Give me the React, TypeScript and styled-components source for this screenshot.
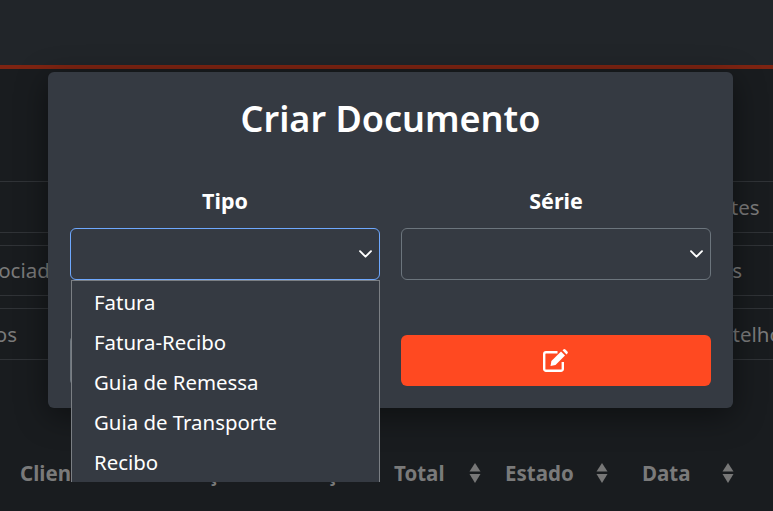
import styled, { createGlobalStyle } from 'styled-components';

const TIPOS = ['Fatura', 'Fatura-Recibo', 'Guia de Remessa', 'Guia de Transporte', 'Recibo'];

const LINKS = [
  { left: '', leftWidth: 0, right: 'Clientes', rightWidth: 90 },
  { left: 'Documentos Associados', leftWidth: 72, right: 'Artigos', rightWidth: 100 },
  { left: 'Recibos', leftWidth: 17, right: 'Martelho', rightWidth: 79 },
];

const COLUMNS = [
  { label: 'Cliente', width: 154, gap: 0, sortable: false },
  { label: 'Preço', width: 89, gap: 0, sortable: false },
  { label: 'Descrição', width: 131, gap: 0, sortable: false },
  { label: 'Total', width: 111, gap: 24, sortable: true },
  { label: 'Estado', width: 137, gap: 22, sortable: true },
  { label: 'Data', width: 131, gap: 32, sortable: true },
];

const Chevron = () => (
  <svg width="13" height="8" viewBox="0 0 13 8" fill="none">
    <path d="M1 1.2l5.5 5.5L12 1.2" stroke="#fff" strokeWidth="1.9" strokeLinecap="round" strokeLinejoin="round" />
  </svg>
);

const SortIcon = () => (
  <svg width="12" height="20" viewBox="0 0 12 20" fill="#777">
    <path d="M6 0l5.5 8.5H.5z" />
    <path d="M6 20l5.5-9H.5z" />
  </svg>
);

const EditIcon = () => (
  <svg width="26" height="23" viewBox="0 0 26 23" fill="none">
    <path
      d="M14.5 3.2H3a1.8 1.8 0 0 0-1.8 1.8v15A1.8 1.8 0 0 0 3 21.800h15a1.8 1.8 0 0 0 1.800-1.800v-7"
      stroke="#fff"
      strokeWidth="2.4"
    />
    <path d="M7.500 17l.9-5L18 2.500l4 4L12.500 16z" fill="#fff" />
    <path d="M19.500 1.300l.9-.8a1.500 1.500 0 0 1 2 0l2 2a1.500 1.500 0 0 1 0 2l-.9.9z" fill="#fff" />
  </svg>
);

const App = () => {
  return (
    <Page>
      <GlobalStyle />
      <Header />
      <LinkList>
        {LINKS.map((link) => (
          <LinkRow key={link.right}>
            <LeftLink $width={link.leftWidth}>{link.left}</LeftLink>
            <RightLink $width={link.rightWidth}>{link.right}</RightLink>
          </LinkRow>
        ))}
      </LinkList>
      <TableHead>
        {COLUMNS.map((column) => (
          <HeadCell key={column.label} $width={column.width} $gap={column.gap}>
            {column.label}
            {column.sortable && <SortIcon />}
          </HeadCell>
        ))}
      </TableHead>
      <Modal>
        <Title>Criar Documento</Title>
        <FieldGrid>
          <Field>
            <FieldLabel>Tipo</FieldLabel>
            <SelectBox $focused>
              <Chevron />
              <OptionList>
                {TIPOS.map((tipo) => (
                  <Option key={tipo}>{tipo}</Option>
                ))}
              </OptionList>
            </SelectBox>
          </Field>
          <Field>
            <FieldLabel>Série</FieldLabel>
            <SelectBox>
              <Chevron />
            </SelectBox>
          </Field>
          <ActionButton $variant="secondary" type="button" />
          <ActionButton $variant="primary" type="button">
            <EditIcon />
          </ActionButton>
        </FieldGrid>
      </Modal>
    </Page>
  );
};

export default App;

const GlobalStyle = createGlobalStyle`
  html, body {
    margin: 0;
    padding: 0;
    background: #191c1f;
  }
  * {
    box-sizing: border-box;
  }
`;

const Page = styled.div`
  position: relative;
  width: 773px;
  height: 511px;
  overflow: hidden;
  background: #191c1f;
  color: #fff;
  font-family: 'Noto Sans', 'Open Sans', sans-serif;
`;

const Header = styled.div`
  height: 69px;
  background: #212529;
  border-bottom: 4px solid #7e2412;
`;

const LinkList = styled.div`
  display: flex;
  flex-direction: column;
  gap: 12px;
  margin-top: 112px;
`;

const LinkRow = styled.div`
  display: flex;
  justify-content: space-between;
  align-items: center;
  height: 51.5px;
  border-top: 1px solid #303337;
  border-bottom: 1px solid #303337;
  color: #7a7a7a;
  font-size: 20.5px;
  white-space: nowrap;
`;

const LeftLink = styled.div<{ $width: number }>`
  display: flex;
  justify-content: flex-end;
  width: ${({ $width }) => $width}px;
`;

const RightLink = styled.div<{ $width: number }>`
  width: ${({ $width }) => $width}px;
`;

const TableHead = styled.div`
  display: flex;
  align-items: center;
  height: 30px;
  margin-top: 98.5px;
  padding-left: 20px;
  color: #7a7a7a;
  font-size: 20.5px;
  font-weight: 700;
  white-space: nowrap;
`;

const HeadCell = styled.div<{ $width: number; $gap: number }>`
  display: flex;
  align-items: center;
  flex: none;
  gap: ${({ $gap }) => $gap}px;
  width: ${({ $width }) => $width}px;
`;

const Modal = styled.div`
  position: absolute;
  top: 72px;
  left: 48px;
  width: 685px;
  height: 336px;
  padding: 22px;
  border-radius: 6px;
  background: #353a42;
  box-shadow: 0 8px 32px rgba(0, 0, 0, 0.45);
`;

const Title = styled.h2`
  margin: 0 0 43px;
  font-size: 36px;
  font-weight: 600;
  line-height: 50px;
  text-align: center;
`;

const FieldGrid = styled.div`
  display: grid;
  grid-template-columns: 310px 310px;
  column-gap: 21px;
  row-gap: 55px;
`;

const Field = styled.div`
  display: flex;
  flex-direction: column;
  gap: 14px;
`;

const FieldLabel = styled.div`
  font-size: 21.5px;
  font-weight: 700;
  line-height: 27px;
  text-align: center;
`;

const SelectBox = styled.div<{ $focused?: boolean }>`
  position: relative;
  display: flex;
  justify-content: flex-end;
  align-items: center;
  height: 52px;
  padding-right: 7px;
  border: 1px solid ${({ $focused }) => ($focused ? '#6ea8fe' : '#6c757d')};
  border-radius: 6px;
`;

const OptionList = styled.ul`
  position: absolute;
  top: 51px;
  left: 0;
  z-index: 2;
  width: 309px;
  height: 202px;
  margin: 0;
  padding: 1px 0 0;
  overflow: hidden;
  list-style: none;
  background: #353a42;
  border: 1px solid #7b7f84;
  border-bottom: 0;
`;

const Option = styled.li`
  height: 40px;
  padding-left: 22px;
  font-size: 20.4px;
  line-height: 40px;
`;

const ActionButton = styled.button<{ $variant: 'primary' | 'secondary' }>`
  display: flex;
  justify-content: center;
  align-items: center;
  height: 51px;
  padding: 0;
  border: 0;
  border-radius: 6px;
  background: ${({ $variant }) => ($variant === 'primary' ? '#ff4921' : '#6c757d')};
`;
